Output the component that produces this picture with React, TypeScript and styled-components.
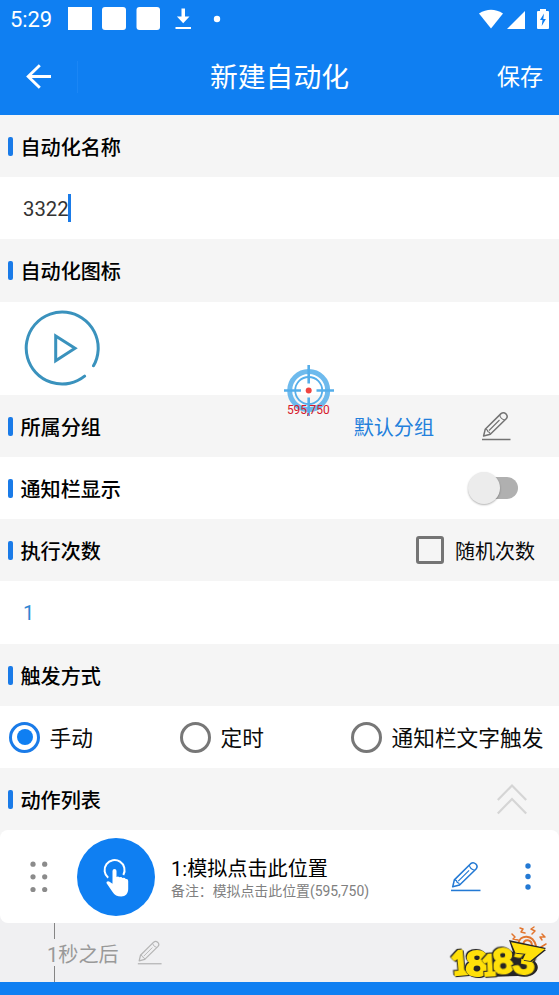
import React from 'react';
import styled, { createGlobalStyle } from 'styled-components';

const BLUE = '#0f7ff2';

const GlobalStyle = createGlobalStyle`
  * { box-sizing: border-box; }
  body {
    margin: 0;
    background: #fff;
    font-family: Roboto, 'Noto Sans CJK SC', sans-serif;
    color: #0a0a0a;
  }
  svg { display: block; flex: none; }
`;

const Screen = styled.main`
  position: relative;
  width: 559px;
  height: 995px;
  overflow: hidden;
  display: flex;
  flex-direction: column;
`;

const StatusBar = styled.div`
  flex: none;
  height: 38px;
  padding: 0 9px 0 10px;
  display: flex;
  align-items: center;
  justify-content: space-between;
  background: ${BLUE};
  color: #fff;
`;

const Clock = styled.span`
  width: 58px;
  font-size: 22px;
  line-height: 38px;
  padding-top: 1px;
  letter-spacing: -0.1px;
`;

const StatusGroup = styled.div`
  display: flex;
  align-items: center;
`;

const AppBar = styled.header`
  flex: none;
  height: 77px;
  display: grid;
  grid-template-columns: 78px 1fr 78px;
  align-items: center;
  background: ${BLUE};
  color: #fff;
`;

const BackButton = styled.button`
  height: 32px;
  padding: 0 0 0 25px;
  border: 0;
  border-right: 1px solid #1b86f5;
  background: none;
  color: inherit;
`;

const PageTitle = styled.h1`
  margin: 0;
  padding-top: 3px;
  text-align: center;
  font-size: 27.8px;
  line-height: 40px;
  font-weight: 400;
`;

const SaveButton = styled.button`
  padding: 2px 0 0;
  border: 0;
  background: none;
  color: inherit;
  font: inherit;
  font-size: 23px;
  line-height: 34px;
`;

const Row = styled.section<{ $h?: number; $tone?: 'gray' | 'white' }>`
  flex: none;
  height: ${(p) => p.$h ?? 62}px;
  display: flex;
  align-items: center;
  padding-left: 8px;
  background: ${(p) => (p.$tone === 'white' ? '#fff' : '#f5f5f5')};
`;

const Heading = styled.h2`
  flex: 1;
  margin: 0;
  padding-top: 3px;
  display: flex;
  align-items: center;
  gap: 8px;
  font-size: 20.1px;
  line-height: 30px;
  font-weight: 500;
  color: #000;

  &::before {
    content: '';
    width: 4.5px;
    height: 19px;
    margin-top: -3px;
    border-radius: 2px;
    background: #1a7be8;
  }
`;

const NameField = styled.div`
  display: flex;
  align-items: center;
  padding: 2px 0 0 15px;
  font-size: 20.3px;
  line-height: 28px;
  color: #333;
`;

const Caret = styled.span`
  width: 3px;
  height: 28px;
  margin: -3px 0 0 -1px;
  background: #1a7be8;
`;

const CountValue = styled.span`
  padding: 1px 0 0 15px;
  font-size: 20px;
  line-height: 28px;
  color: #2f87d2;
`;

const IconPreview = styled.div`
  padding: 0 0 1px 15.5px;
`;

const GroupName = styled.span`
  margin-right: 47px;
  padding-top: 3px;
  font-size: 20.1px;
  line-height: 30px;
  color: #2380dc;
`;

const Slot = styled.div<{ $right: number }>`
  margin-right: ${(p) => p.$right}px;
`;

const Switch = styled.div`
  width: 51px;
  height: 34px;
  margin-right: 41px;
  padding: 6px 0 6px 16px;
  position: relative;

  &::before {
    content: '';
    display: block;
    height: 22px;
    border-radius: 11px;
    background: #b0b0b0;
  }
  &::after {
    content: '';
    position: absolute;
    left: 1px;
    top: 1px;
    width: 32px;
    height: 32px;
    border-radius: 50%;
    background: #ececec;
    box-shadow: 0 1px 2px rgba(0, 0, 0, 0.3);
  }
`;

const CheckLabel = styled.label`
  display: flex;
  align-items: center;
  gap: 11px;
  margin-right: 24px;
  padding-top: 4px;
  font-size: 20px;
  line-height: 30px;
`;

const CheckBox = styled.span`
  width: 28px;
  height: 28px;
  margin-top: -4px;
  border: 3px solid #747474;
  border-radius: 3px;
`;

const RadioGrid = styled.div`
  flex: none;
  height: 62px;
  display: grid;
  grid-template-columns: 171px 171px 1fr;
  padding-left: 9px;
  align-items: center;
  background: #fff;
`;

const RadioLabel = styled.label`
  display: flex;
  align-items: center;
  gap: 9.5px;
  padding-top: 3px;
  white-space: nowrap;
  font-size: 21.7px;
  line-height: 32px;
`;

const RadioRing = styled.span<{ $on?: boolean }>`
  width: 31px;
  height: 31px;
  margin-top: -3px;
  border-radius: 50%;
  border: 3px solid ${(p) => (p.$on ? '#1a7be8' : '#777')};
  display: grid;
  place-items: center;

  &::after {
    content: '';
    width: 16px;
    height: 16px;
    border-radius: 50%;
    background: ${(p) => (p.$on ? '#0f7ff2' : 'transparent')};
  }
`;

const ActionList = styled.div`
  flex: none;
  height: 152px;
  background: linear-gradient(#f5f5f5 50px, #f0f0f2 51px);
`;

const ActionCard = styled.article`
  height: 93px;
  padding: 0 28px 0 30px;
  display: flex;
  align-items: center;
  border-radius: 8px;
  background: #fff;
`;

const ActionIcon = styled.div`
  width: 78px;
  height: 78px;
  margin: 0 16px 0 29px;
  border-radius: 50%;
  background: ${BLUE};
`;

const ActionText = styled.div`
  flex: 1;
  padding-top: 4px;
  display: flex;
  flex-direction: column;
  white-space: nowrap;
`;

const ActionTitle = styled.strong`
  font-weight: 400;
  font-size: 20.1px;
  line-height: 26px;
  color: #000;
`;

const ActionNote = styled.small`
  margin-top: -1px;
  font-size: 13.9px;
  line-height: 20px;
  color: #808080;
`;

const DelayRow = styled.div`
  display: flex;
  height: 59px;
  padding-left: 47px;
  gap: 19px;
`;

const DelayColumn = styled.div`
  display: flex;
  flex-direction: column;
  align-items: flex-start;
  font-size: 20.1px;
  line-height: 30px;
  color: #999;

  &::before,
  &::after {
    content: '';
    flex: none;
    width: 1px;
    height: 16px;
    margin-left: 7px;
    background: #858585;
  }
  &::before {
    margin-bottom: 1px;
  }
  &::after {
    margin-top: -4px;
  }
`;

const DelayEdit = styled.div`
  padding-top: 17px;
  margin-left: -1px;
`;

const NavBar = styled.div`
  flex: 1;
  background: ${BLUE};
`;

const Target = styled.div`
  position: absolute;
  left: 283px;
  top: 364px;
`;

const Watermark = styled.div`
  position: absolute;
  left: 448px;
  top: 922px;
`;

const LogoDigits = styled.g`
  font-family: Lato, sans-serif;
  font-weight: 900;
  fill: #ffe00a;
  stroke: #ffe00a;
  stroke-width: 1.8px;

  & > * {
    filter: drop-shadow(1px 1px 0 #262526) drop-shadow(-1px -1px 0 #262526);
  }
`;

const Pencil = ({ size = 30, color = '#737373' }: { size?: number; color?: string }) => (
  <svg width={size} height={size} viewBox="0 0 30 30" fill="none" stroke={color} strokeWidth="1.5" strokeLinejoin="round">
    <path d="M2.600 25 4.200 18.300 20 2.600Q22.500.6 25 2.900 27.300 5.300 25.200 7.700L9.300 23.200Z" />
    <path d="M4.200 18.300Q6.600 18.300 6.900 20.700 9 20.900 9.300 23.200M18.700 4Q19.500 8 23.800 9M8 19.500 18.500 9" strokeWidth="1.100" />
    <path d="M1 28.500H29.500" />
  </svg>
);

const StatusIcons = () => (
  <svg width="160" height="26" viewBox="68 6 160 26" fill="#fff">
    <rect x="68" y="7" width="24" height="23" />
    <rect x="102" y="7" width="24" height="23" rx="3" />
    <rect x="136.500" y="7" width="23.500" height="23" rx="3" />
    <path d="M181.500 8.500h3.500v8h4.500l-6.300 6.700-6.300-6.700h4.600zM175.500 27h15.500v2h-15.500z" />
    <circle cx="217" cy="19" r="3.200" />
  </svg>
);

const SignalIcons = () => (
  <svg width="71" height="24" viewBox="479 6 71 24">
    <path d="M479 12.500Q491 5 503 12.500L491 27.500Z" fill="#fff" />
    <path d="M507 28 525 10V28Z" fill="#fff" />
    <path d="M538 10h2V8h6v2h2q1 0 1 1v16q0 1-1 1h-10q-1 0-1-1V11q0-1 1-1z" fill="#fff" />
    <path d="M544 12.500 540 19h2.500l-.8 6 4.200-7h-2.600z" fill={BLUE} />
  </svg>
);

const BackArrow = () => (
  <svg width="28" height="28" viewBox="0 0 28 28" fill="none" stroke="#fff" strokeWidth="2.900">
    <path d="M14.800 2.200 3.200 13.500 14.800 24.800M3.200 13.500H26" />
  </svg>
);

const PlayIcon = () => (
  <svg width="78" height="78" viewBox="0 0 78 78" fill="none" stroke="#3a92bd" strokeWidth="3">
    <path d="M60.600 67.200A36 36 0 1 1 69.500 56.800" strokeLinecap="round" />
    <path d="M31.700 27V51.700L51 39.300Z" />
  </svg>
);

const TouchIcon = () => (
  <svg width="78" height="78" viewBox="0 0 78 78">
    <path d="M31.200 39.800A10 10 0 1 1 46.300 37" fill="none" stroke="#fff" strokeWidth="2" />
    <path
      d="M35.500 33a2 2 0 0 1 4 0v6q1.500-1.100 3 .3 2-1 3 .7 2.300-1 3.200 1.100 2.500-.5 2.500 2v8c0 4.500-2.500 7.500-7 7.500-4 0-6.600-1.400-8.800-4.800l-5.800-8.600c-.7-1.700 1.600-2.700 3-1.500l2.900 2z"
      fill="#fff"
    />
  </svg>
);

const DragDots = () => (
  <svg width="18" height="32" viewBox="0 0 18 32" fill="#8b8b8b">
    {[3.2, 15.8, 28.5].map((y) => (
      <React.Fragment key={y}>
        <circle cx="3" cy={y} r="2.600" />
        <circle cx="14.700" cy={y} r="2.600" />
      </React.Fragment>
    ))}
  </svg>
);

const MoreDots = () => (
  <svg width="6" height="28" viewBox="0 0 6 28" fill="#2379d4">
    <circle cx="3" cy="3" r="2.700" />
    <circle cx="3" cy="13.500" r="2.700" />
    <circle cx="3" cy="24" r="2.700" />
  </svg>
);

const CollapseIcon = () => (
  <svg width="30" height="32" viewBox="0 0 30 32" fill="none" stroke="#d5d5d5" strokeWidth="2.200">
    <path d="M.8 17 15 2.500 29.200 17M.8 30.500 15 16 29.200 30.500" />
  </svg>
);

const Crosshair = () => (
  <svg width="52" height="54" viewBox="0 0 52 54">
    <g fill="none" stroke="#55aeea">
      <circle cx="25.700" cy="26.500" r="19" strokeWidth="5" opacity="0.850" />
      <circle cx="25.700" cy="26.500" r="13.500" strokeWidth="1.800" />
      <path d="M25.700 1V19.500M25.700 33.500V52M1 26.500H18M33.500 26.500H51" strokeWidth="2.600" />
    </g>
    <circle cx="25.700" cy="26.500" r="3" fill="#f04440" />
    <text x="25.300" y="49.800" textAnchor="middle" fontFamily="Roboto" fontSize="12" fill="#d5182b">595,750</text>
  </svg>
);

const Brand = () => (
  <svg width="104" height="60" viewBox="0 0 104 60">
    <g fill="none" stroke="#e2762f" strokeWidth="2" strokeLinecap="round" strokeLinejoin="round">
      <path d="M70 22C72 12 85 12 88 24M75 23C76 16 84 17 84 24" />
      <path d="M64 12 67 15 65 17 70 18M72 6 75 7 73 10 77 11M86 5 83 7 87 9 84 12M94 12 97 15 92 15 94 18M98 22 93 25" strokeWidth="1.500" />
    </g>
    <path d="M61 18 98 26 85 38C96 45 87 58 70 54L40 55 22 53 22 34 60 28 65 30Z" fill="#262526" />
    <LogoDigits>
      <text transform="translate(4 53.500) rotate(-5) scale(1 1.080)" fontSize="30">1</text>
      <text transform="translate(17.500 53.500) scale(1.200 1.050)" fontSize="33">8</text>
      <text transform="translate(45 52) rotate(-3) scale(1.150 1.050)" fontSize="32">8</text>
      <text transform="translate(34.500 54) rotate(-3) scale(0.900 1.080)" fontSize="27">1</text>
      <text transform="translate(64 51) rotate(5) scale(1.250 1.050)" fontSize="31">3</text>
      <path d="M64.500 21.500 95 27.500 82 38 76 37 79 31 68 30Z" />
    </LogoDigits>
  </svg>
);

export default function App() {
  return (
    <>
      <GlobalStyle />
      <Screen>
        <StatusBar>
          <StatusGroup>
            <Clock>5:29</Clock>
            <StatusIcons />
          </StatusGroup>
          <SignalIcons />
        </StatusBar>
        <AppBar>
          <BackButton aria-label="返回"><BackArrow /></BackButton>
          <PageTitle>新建自动化</PageTitle>
          <SaveButton>保存</SaveButton>
        </AppBar>

        <Row><Heading>自动化名称</Heading></Row>
        <Row $tone="white"><NameField>3322<Caret /></NameField></Row>
        <Row $h={63}><Heading>自动化图标</Heading></Row>
        <Row $tone="white" $h={93}><IconPreview><PlayIcon /></IconPreview></Row>
        <Row>
          <Heading>所属分组</Heading>
          <GroupName>默认分组</GroupName>
          <Slot $right={48}><Pencil /></Slot>
        </Row>
        <Row $tone="white">
          <Heading>通知栏显示</Heading>
          <Switch role="switch" aria-checked={false} />
        </Row>
        <Row>
          <Heading>执行次数</Heading>
          <CheckLabel><CheckBox />随机次数</CheckLabel>
        </Row>
        <Row $tone="white" $h={63}><CountValue>1</CountValue></Row>
        <Row><Heading>触发方式</Heading></Row>
        <RadioGrid>
          <RadioLabel><RadioRing $on />手动</RadioLabel>
          <RadioLabel><RadioRing />定时</RadioLabel>
          <RadioLabel><RadioRing />通知栏文字触发</RadioLabel>
        </RadioGrid>
        <Row>
          <Heading>动作列表</Heading>
          <Slot $right={32}><CollapseIcon /></Slot>
        </Row>

        <ActionList>
          <ActionCard>
            <DragDots />
            <ActionIcon><TouchIcon /></ActionIcon>
            <ActionText>
              <ActionTitle>1:模拟点击此位置</ActionTitle>
              <ActionNote>备注：模拟点击此位置(595,750)</ActionNote>
            </ActionText>
            <Slot $right={44}><Pencil size={31} color="#2379d4" /></Slot>
            <MoreDots />
          </ActionCard>
          <DelayRow>
            <DelayColumn>1秒之后</DelayColumn>
            <DelayEdit><Pencil size={25} color="#b5b5b5" /></DelayEdit>
          </DelayRow>
        </ActionList>
        <NavBar />

        <Target><Crosshair /></Target>
        <Watermark><Brand /></Watermark>
      </Screen>
    </>
  );
}
